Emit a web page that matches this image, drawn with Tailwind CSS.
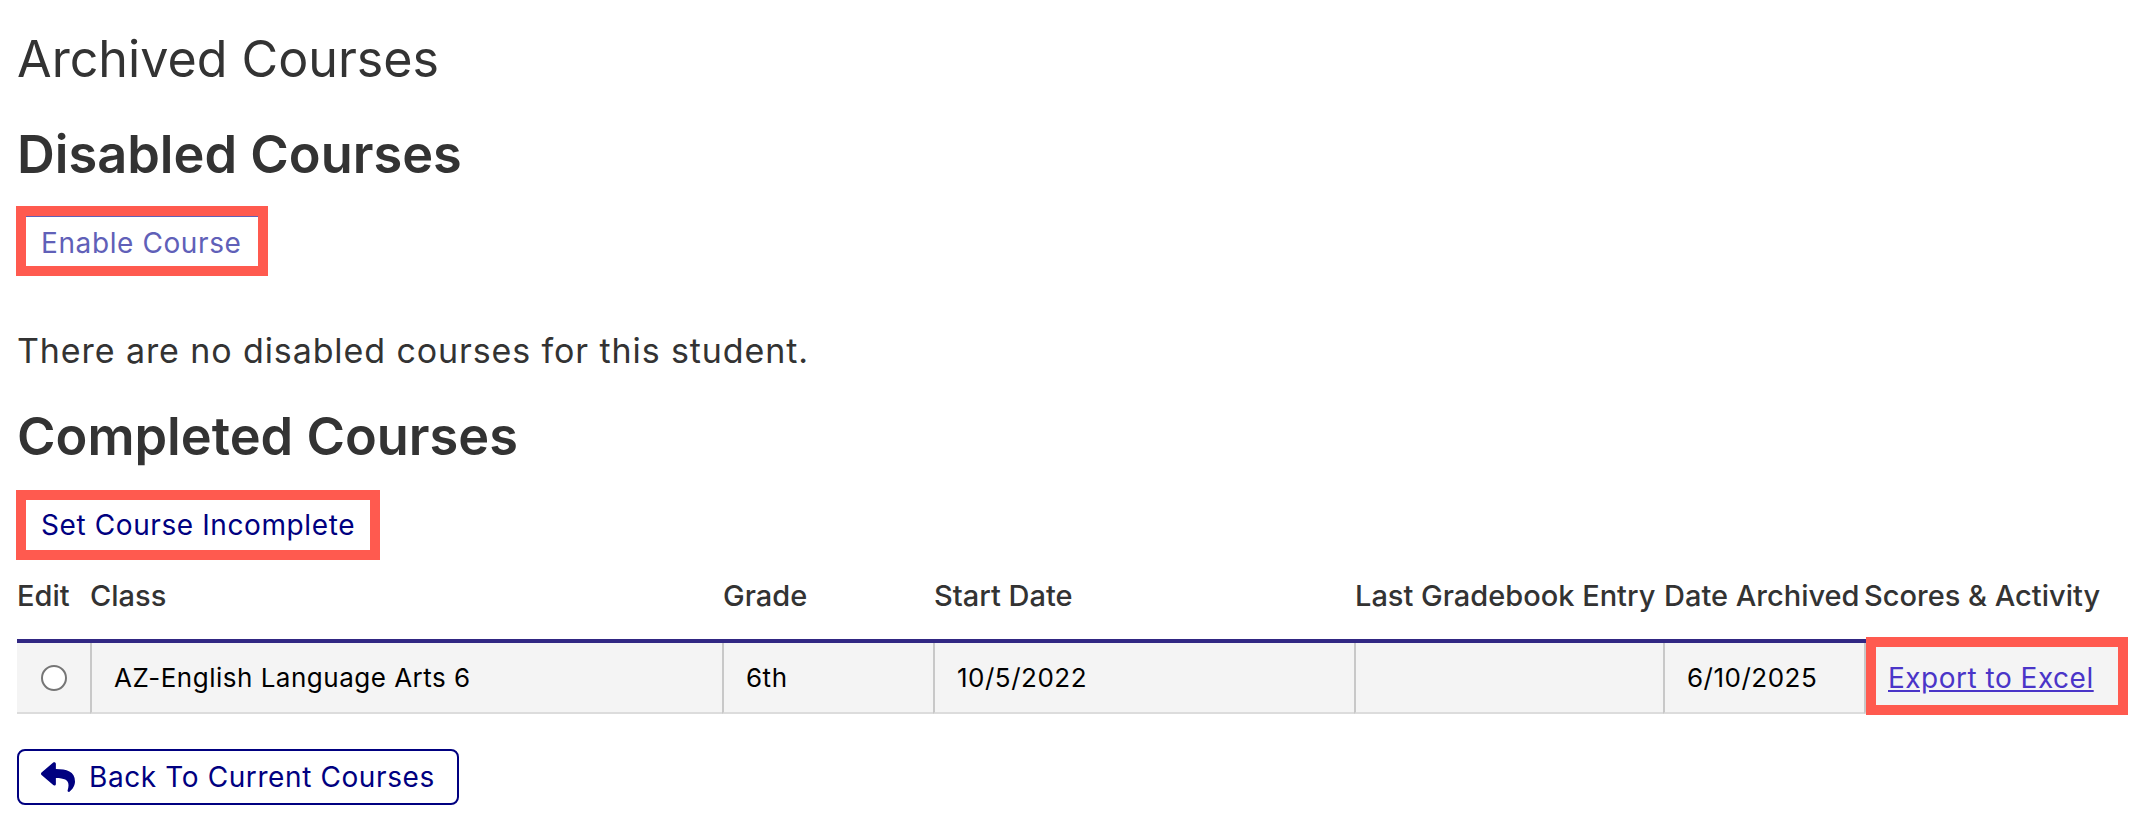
<!DOCTYPE html>
<html lang="en">
<head>
  <meta charset="UTF-8">
  <title>Archived Courses</title>
  <script src="https://cdn.jsdelivr.net/npm/@tailwindcss/browser@4"></script>
</head>
<body class="bg-white text-[#333] font-['Inter',sans-serif] overflow-hidden">
  <div class="pl-[17px] pr-[16px] pt-[30px]">
    <h1 class="text-[50.2px] leading-[58px] font-normal">Archived Courses</h1>
    <h2 class="text-[52.3px] leading-[62px] font-semibold mt-[35px]">Disabled Courses</h2>

    <!-- Enable button, marked in red -->
    <div class="inline-block -ml-[1px] mt-[21px] border-[10px] border-[#ff5a4f]">
      <button class="block h-[50px] w-[232px] pl-[15px] pt-[3px] text-left border-t border-[#6060b8] text-[28px] tracking-[0.6px] text-[#6060b8]">Enable Course</button>
    </div>

    <p class="text-[34px] leading-[40px] tracking-[0.9px] mt-[55px]">There are no disabled courses for this student.</p>

    <h2 class="text-[52.3px] leading-[62px] font-semibold mt-[34px]">Completed Courses</h2>

    <!-- Set incomplete button, marked in red -->
    <div class="inline-block -ml-[1px] mt-[23px] border-[10px] border-[#ff5a4f]">
      <button class="block h-[50px] pl-[15px] pr-[15px] text-[28px] tracking-[0.6px] text-[#000080]">Set Course Incomplete</button>
    </div>

    <table class="table-fixed border-separate border-spacing-0 w-[2111px] -mt-[2px]">
      <colgroup>
        <col class="w-[73px]">
        <col class="w-[632px]">
        <col class="w-[211px]">
        <col class="w-[421px]">
        <col class="w-[309px]">
        <col class="w-[201px]">
        <col>
      </colgroup>
      <thead>
        <tr class="text-left text-[29px] whitespace-nowrap">
          <th class="h-[85px] pb-[5px] font-medium border-b-4 border-[#312783]">Edit</th>
          <th class="pb-[5px] font-medium border-b-4 border-[#312783]">Class</th>
          <th class="pb-[5px] pl-[1px] font-medium border-b-4 border-[#312783]">Grade</th>
          <th class="pb-[5px] pl-[1px] font-medium border-b-4 border-[#312783]">Start Date</th>
          <th class="pb-[5px] pl-[1px] font-medium border-b-4 border-[#312783]">Last Gradebook Entry</th>
          <th class="pb-[5px] pl-[1px] font-medium border-b-4 border-[#312783]">Date Archived</th>
          <th class="pb-[5px] font-medium border-b-4 border-[#312783]">Scores &amp; Activity</th>
        </tr>
      </thead>
      <tbody>
        <tr class="h-[71px] bg-[#f4f4f4] text-[26px] tracking-[0.5px] text-black">
          <td class="text-center align-middle border-b-2 border-[#dcdcdc]"><input type="radio" name="course" class="appearance-none w-[26px] h-[26px] m-0 -mt-[3px] align-middle rounded-full border-2 border-[#767676] bg-white"></td>
          <td class="border-l-2 border-l-[#c8c8c8] border-b-2 border-b-[#dcdcdc] px-[22px]">AZ-English Language Arts 6</td>
          <td class="border-l-2 border-l-[#c8c8c8] border-b-2 border-b-[#dcdcdc] px-[22px]">6th</td>
          <td class="border-l-2 border-l-[#c8c8c8] border-b-2 border-b-[#dcdcdc] px-[22px]">10/5/2022</td>
          <td class="border-l-2 border-l-[#c8c8c8] border-b-2 border-b-[#dcdcdc] px-[22px]"></td>
          <td class="border-l-2 border-l-[#c8c8c8] border-b-2 border-b-[#dcdcdc] px-[22px]">6/10/2025</td>
          <td class="border-l-2 border-l-[#c8c8c8] border-b-2 border-b-[#dcdcdc] px-[22px] relative">
            <a href="#" class="underline text-[28px] text-[#4a35c8]">Export to Excel</a>
            <span class="absolute -top-[6px] -bottom-[3px] left-0 right-0 border-[10px] border-[#ff5a4f] pointer-events-none"></span>
          </td>
        </tr>
      </tbody>
    </table>

    <button class="flex items-center gap-[14px] mt-[35px] h-[56px] pl-[22px] pr-[22px] border-2 border-[#000080] rounded-[8px] text-[28px] tracking-[0.6px] text-[#000080]">
      <svg viewBox="0 0 512 512" class="w-[34px] h-[34px] fill-[#000080]"><path d="M8.309 189.836L184.313 37.851C199.719 24.546 224 35.347 224 56.015v80.053c160.629 1.839 288 34.032 288 186.258 0 61.441-39.581 122.309-83.333 154.132-13.653 9.931-33.111-2.533-28.077-18.631 45.344-145.012-21.507-183.51-176.59-185.742V360c0 20.7-24.3 31.453-39.687 18.164l-176.004-152c-11.071-9.562-11.086-26.753 0-36.328z"/></svg>
      Back To Current Courses
    </button>
  </div>
</body>
</html>
